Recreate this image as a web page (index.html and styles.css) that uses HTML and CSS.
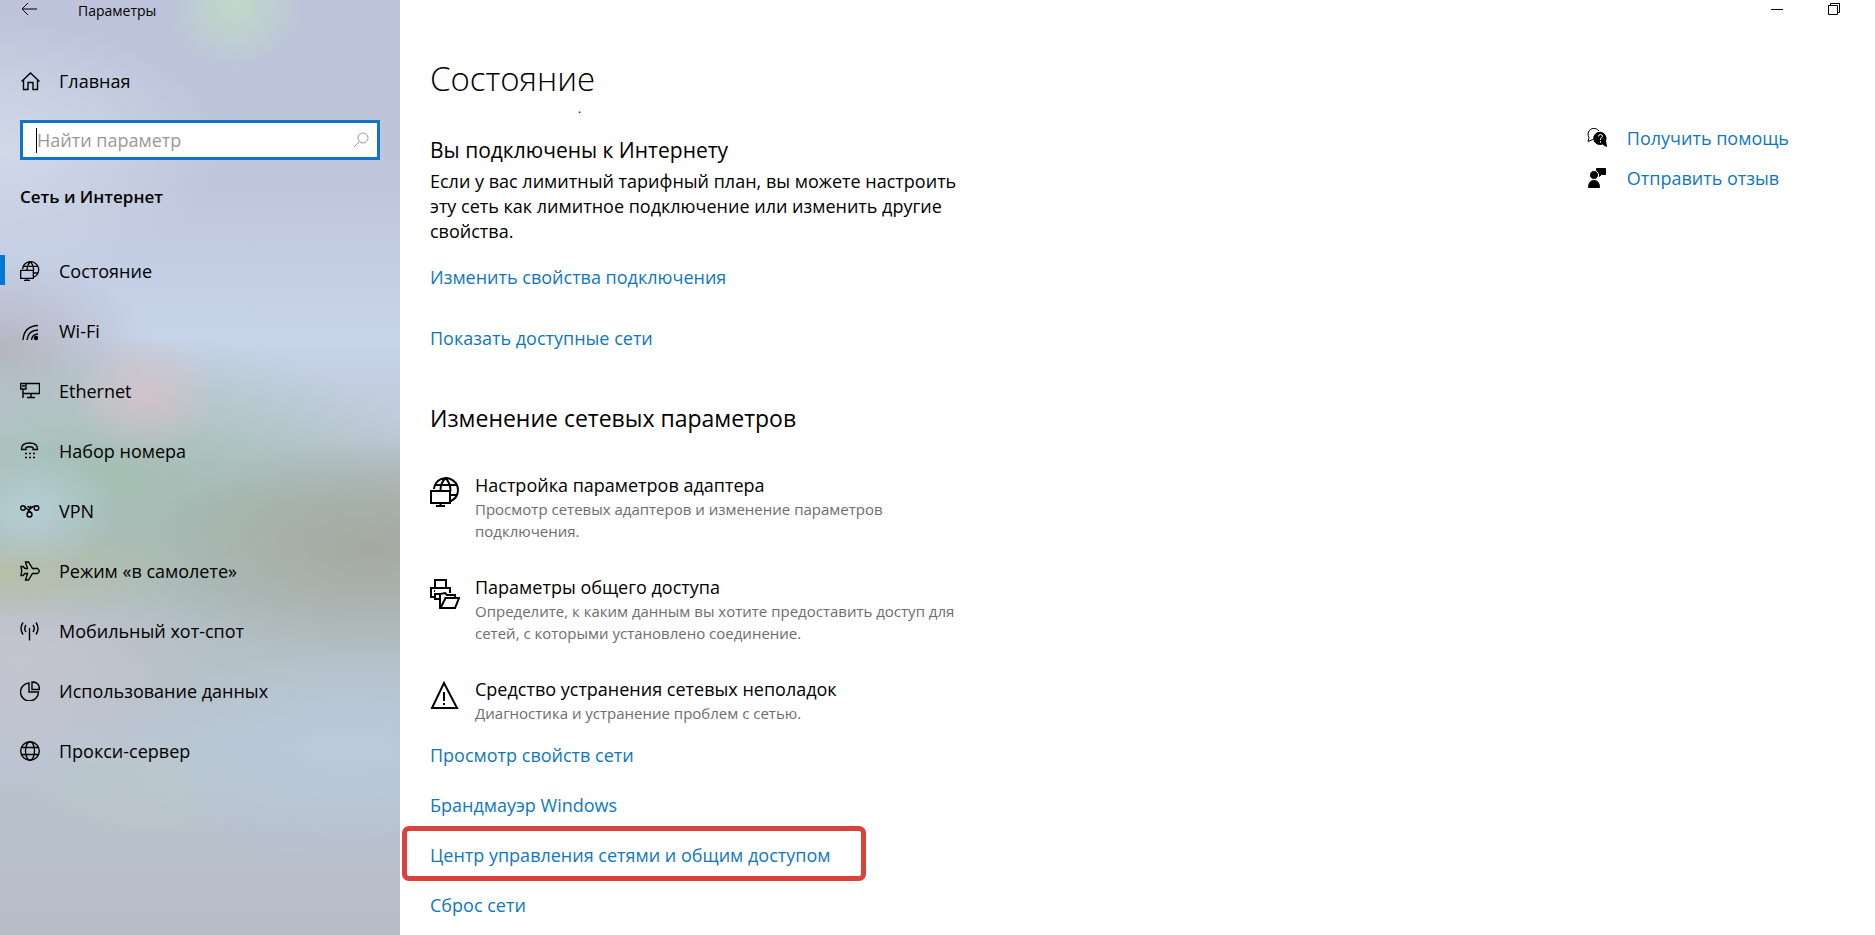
FILE: index.html
```html
<!DOCTYPE html>
<html lang="ru">

<head>
  <meta charset="UTF-8" />
  <meta name="viewport" content="width=device-width, initial-scale=1.0" />
  <title>Параметры</title>
  <link rel="stylesheet" href="styles.css">
</head>

<body>
  <aside class="sidebar">
    <div class="titlebar">
      <button class="back" aria-label="Назад">
        <svg width="16" height="14" viewBox="0 0 16 14"><path d="M7 1L1 7l6 6M1 7h15" /></svg>
      </button>
      <span>Параметры</span>
    </div>

    <a class="nav-item home" href="#">
      <svg width="20" height="20" viewBox="0 0 20 20"><path d="M1.500 10.500L10.500 2l9 8.500M3.500 9v9.500H8v-7h5v7h4.500V9" /></svg>
      Главная
    </a>

    <div class="search">
      <input type="text" id="search" placeholder="Найти параметр" aria-label="Найти параметр" />
      <svg width="16" height="16" viewBox="0 0 16 16"><circle cx="10" cy="6" r="5" /><path d="M6.500 9.500L1 15" /></svg>
    </div>

    <h2>Сеть и Интернет</h2>

    <nav>
      <a class="nav-item active" href="#">
        <svg class="bold" width="20" height="20" viewBox="0 0 30 30"><path d="M4 12A12 12 0 1 1 21 24M5 8h21M21 18h6M15.500 1q-5 5-5 12M15.500 1q5 5 5 13M1 14h19v12H1zM10.500 26v3M6 29h9" /></svg>
        Состояние
      </a>
      <a class="nav-item" href="#">
        <svg width="20" height="20" viewBox="0 0 20 20"><path d="M3 19Q4 5 18 4.500M7 19Q8 9.500 18 9M11.500 19Q12 13.500 18 13" /><circle class="solid" cx="16" cy="17" r="1.500" /></svg>
        Wi-Fi
      </a>
      <a class="nav-item" href="#">
        <svg width="20" height="20" viewBox="0 0 20 20"><path d="M6 2.500h13.500v10H3M.7 2.500H6v5.500H.7zM2 5h3M3 8v9M11 12.500V16M7 16.500h8" /></svg>
        Ethernet
      </a>
      <a class="nav-item" href="#">
        <svg width="20" height="20" viewBox="0 0 20 20"><path d="M1.500 8.500Q1 2 9.500 2t8 6.500H13v-2q-3.500-1.500-7 0v2z" /><path class="dots" d="M5 12.500h10M5 16.500h10" /></svg>
        Набор номера
      </a>
      <a class="nav-item" href="#">
        <svg width="20" height="20" viewBox="0 0 20 20"><circle cx="3" cy="7" r="2.300" /><circle cx="16.500" cy="7" r="2.300" /><circle cx="9.500" cy="13.500" r="2.500" /><path d="M5 6l6.500 6M15 5.200C11 5 9 9 7.500 12M7.500 5l2 2 1.500-2" /></svg>
        VPN
      </a>
      <a class="nav-item" href="#">
        <svg width="20" height="20" viewBox="0 0 20 20"><path d="M5.500 1H8.500l4 6.500h5q3.500 2.500 0 5h-5l-4 6.500h-3l2-6.500H5l-2 2H1L1.700 10 1 5.500h2l2 2h2.500z" /></svg>
        Режим «в самолете»
      </a>
      <a class="nav-item" href="#">
        <svg width="20" height="20" viewBox="0 0 20 20"><path d="M9.500 7v12.500M3 1.500q-4 6 0 12M6 4q-2.500 3.500 0 7M16 1.500q4 6 0 12M13 4q2.500 3.500 0 7" /></svg>
        Мобильный хот-спот
      </a>
      <a class="nav-item" href="#">
        <svg width="20" height="20" viewBox="0 0 20 20"><path d="M9 2A9 9 0 1 0 18.500 11H9zM12 1v7.500h7.500Q19.500 1 12 1z" /></svg>
        Использование данных
      </a>
      <a class="nav-item" href="#">
        <svg width="20" height="20" viewBox="0 0 20 20"><circle cx="10" cy="10" r="9.300" /><ellipse cx="10" cy="10" rx="4.500" ry="9.300" /><path d="M1.500 6.500h17M1.500 13.500h17" /></svg>
        Прокси-сервер
      </a>
    </nav>
  </aside>

  <main>
    <div class="window-buttons">
      <button aria-label="Свернуть"><svg width="12" height="12" viewBox="0 0 12 12"><path d="M0 6.500h12" /></svg></button>
      <button aria-label="Восстановить"><svg width="12" height="12" viewBox="0 0 12 12"><path d="M.5 2.500h9v9h-9zM2.500 2.500v-2h9v9h-2" /></svg></button>
    </div>

    <div class="columns">
      <div class="content">
        <h1>Состояние</h1>
        <div class="speck">.</div>

        <section class="status">
          <h3>Вы подключены к Интернету</h3>
          <p>Если у вас лимитный тарифный план, вы можете настроить эту сеть как лимитное подключение или изменить другие свойства.</p>
          <a href="#">Изменить свойства подключения</a>
          <a href="#">Показать доступные сети</a>
        </section>

        <h2>Изменение сетевых параметров</h2>

        <div class="options">
          <a class="option" href="#">
            <svg width="30" height="30" viewBox="0 0 30 30"><path d="M4 12A12 12 0 1 1 21 24M5 8h21M21 18h6M15.500 1q-5 5-5 12M15.500 1q5 5 5 13M1 14h19v12H1zM10.500 26v3M6 29h9" /></svg>
            <span>
              <strong>Настройка параметров адаптера</strong>
              <small>Просмотр сетевых адаптеров и изменение параметров подключения.</small>
            </span>
          </a>
          <a class="option" href="#">
            <svg width="30" height="30" viewBox="0 0 30 30"><path d="M5 9V1h11v8M5 18H1V9h19v5M4 12h1M10 20H5v-5h5M10 29V15l5-1 2 2h8v3M10.500 29l5-10H29l-4 10z" /></svg>
            <span>
              <strong>Параметры общего доступа</strong>
              <small>Определите, к каким данным вы хотите предоставить доступ для сетей, с которыми установлено соединение.</small>
            </span>
          </a>
          <a class="option" href="#">
            <svg width="30" height="30" viewBox="0 0 30 30"><path d="M14 2L2 27h25zM14 11v9M14 22v2" /></svg>
            <span>
              <strong>Средство устранения сетевых неполадок</strong>
              <small>Диагностика и устранение проблем с сетью.</small>
            </span>
          </a>
        </div>

        <ul class="links">
          <li><a href="#">Просмотр свойств сети</a></li>
          <li><a href="#">Брандмауэр Windows</a></li>
          <li class="marked"><a href="#">Центр управления сетями и общим доступом</a></li>
          <li><a href="#">Сброс сети</a></li>
        </ul>
      </div>

      <div class="help">
        <a href="#">
          <svg width="20" height="20" viewBox="0 0 20 20"><path d="M6 11.500L1 13.500l1-4A5.500 5.500 0 1 1 12 3" /><path class="solid" d="M19.500 18.500l-4-2.500A6.200 6.200 0 1 1 18.500 13z" /><path class="white" d="M11.500 8.500q0-2 2-2t2 2q0 1-2 2v1.500M13.500 13v1.500" /></svg>
          Получить помощь
        </a>
        <a href="#">
          <svg width="20" height="20" viewBox="0 0 20 20"><path class="solid" d="M9.500.5h9v6h-4l-2 2v-2h-3z" /><circle class="solid white" cx="7" cy="7" r="4.500" /><path class="solid" d="M1.500 19.500q0-7 5.500-7t5.500 7z" /></svg>
          Отправить отзыв
        </a>
      </div>
    </div>
  </main>
</body>

</html>
```

FILE: styles.css
```css
*,
*::before {
  margin: 0;
  padding: 0;
  box-sizing: border-box;
}

body {
  display: flex;
  min-height: 100vh;
  font-family: 'Open Sans', 'Noto Sans', sans-serif;
  font-size: 18px;
  line-height: 25px;
  color: #000;
  background: #fff;
}

a {
  color: #0f77bf;
  text-decoration: none;
}

button {
  border: none;
  background: none;
}

svg {
  flex: none;
  fill: none;
  stroke: currentColor;
}

.solid {
  fill: currentColor;
}

.white {
  stroke: #fff;
}

.dots {
  stroke-dasharray: 2 2;
}

.sidebar {
  width: 400px;
  flex: none;
  background:
    radial-gradient(ellipse 70px 65px at 235px 5px, #c0dac8, transparent),
    radial-gradient(ellipse 75px 60px at 145px 395px, #dac0c8cc, transparent),
    radial-gradient(ellipse 90px 60px at 30px 510px, #b6ced6, transparent),
    radial-gradient(ellipse 200px 50px at 0 570px, #b5bfa8, transparent),
    radial-gradient(ellipse 230px 110px at 370px 550px, #a2a699cc, transparent),
    radial-gradient(ellipse 330px 150px at 100px 480px, #a4bfb3, transparent),
    radial-gradient(ellipse 150px 90px at 0 350px, #b6b4c0, transparent),
    radial-gradient(ellipse 220px 140px at 0 150px, #d0d9e8, transparent),
    radial-gradient(ellipse 200px 120px at 20px 660px, #c5c5d2, transparent),
    radial-gradient(ellipse 240px 110px at 350px 750px, #bacde2aa, transparent),
    radial-gradient(ellipse 120px 60px at 150px 790px, #bac8c8aa, transparent),
    linear-gradient(#bcc3da, #bfc6dc 20%, #c7d4ea 36%, #bfcad8 46%, #abb6b9 54%, #b0bdc0 65%, #b9c5d0 80%, #b7bcc7);
}

.titlebar {
  display: flex;
  align-items: center;
  gap: 41px;
  height: 20px;
  padding-left: 21px;
  font-size: 14px;
}

.nav-item {
  display: flex;
  align-items: center;
  gap: 19px;
  height: 60px;
  padding-left: 20px;
  color: #000;
}

.nav-item svg {
  stroke-width: 1.4;
}

.nav-item .bold {
  stroke-width: 2;
}

.active {
  background: linear-gradient(#0078d7, #0078d7) 0 14px / 5px 30px no-repeat;
}

.home {
  margin-top: 31px;
}

.search {
  display: flex;
  align-items: center;
  height: 40px;
  margin: 9px 20px 0;
  padding: 0 8px 0 13px;
  border: 3px solid #1374c4;
  background: #fff;
  color: #999;
}

/* text cursor */
.search::before {
  content: "";
  width: 1px;
  height: 25px;
  background: #000;
}

.search input {
  flex: 1;
  border: none;
  outline: none;
  font: inherit;
}

.search input::placeholder {
  color: #999;
}

.sidebar h2 {
  margin: 24px 20px 32px;
  font-size: 17px;
  font-weight: 600;
}

main {
  flex: 1;
}

.window-buttons {
  display: flex;
  justify-content: flex-end;
  gap: 45px;
  height: 20px;
  padding-right: 35px;
}

.columns {
  display: flex;
  justify-content: space-between;
  padding: 34px 86px 0 30px;
}

.content {
  width: 535px;
}

h1 {
  font-size: 33px;
  font-weight: 300;
  line-height: 50px;
}

.speck {
  height: 31px;
  padding-left: 148px;
  font-size: 12px;
  line-height: 10px;
}

h3 {
  margin-bottom: 4px;
  font-size: 21px;
  font-weight: 400;
  line-height: 30px;
}

.status a {
  display: block;
  margin-top: 36px;
}

.status p + a {
  margin-top: 21px;
}

.content h2 {
  margin: 50px 0 37px;
  font-size: 23px;
  font-weight: 400;
  line-height: 35px;
}

.options {
  display: flex;
  flex-direction: column;
  gap: 33px;
}

.option {
  display: flex;
  gap: 15px;
  color: #000;
}

.option svg {
  margin-top: 4px;
  stroke-width: 2;
}

.option strong,
.option small {
  display: block;
  font-weight: 400;
}

.option small {
  color: #6d6d6d;
  font-size: 15px;
  line-height: 22px;
}

.links {
  margin-top: 6px;
  list-style: none;
  line-height: 50px;
}

.marked {
  position: relative;
}

/* red frame around the link */
.marked::before {
  content: "";
  position: absolute;
  top: -4px;
  bottom: -1px;
  left: -28px;
  width: 464px;
  border: 5px solid #d9433b;
  border-radius: 7px;
  pointer-events: none;
}

.help {
  padding-top: 64px;
}

.help a {
  display: flex;
  align-items: center;
  gap: 20px;
  height: 40px;
}

.help svg {
  color: #000;
}
```
